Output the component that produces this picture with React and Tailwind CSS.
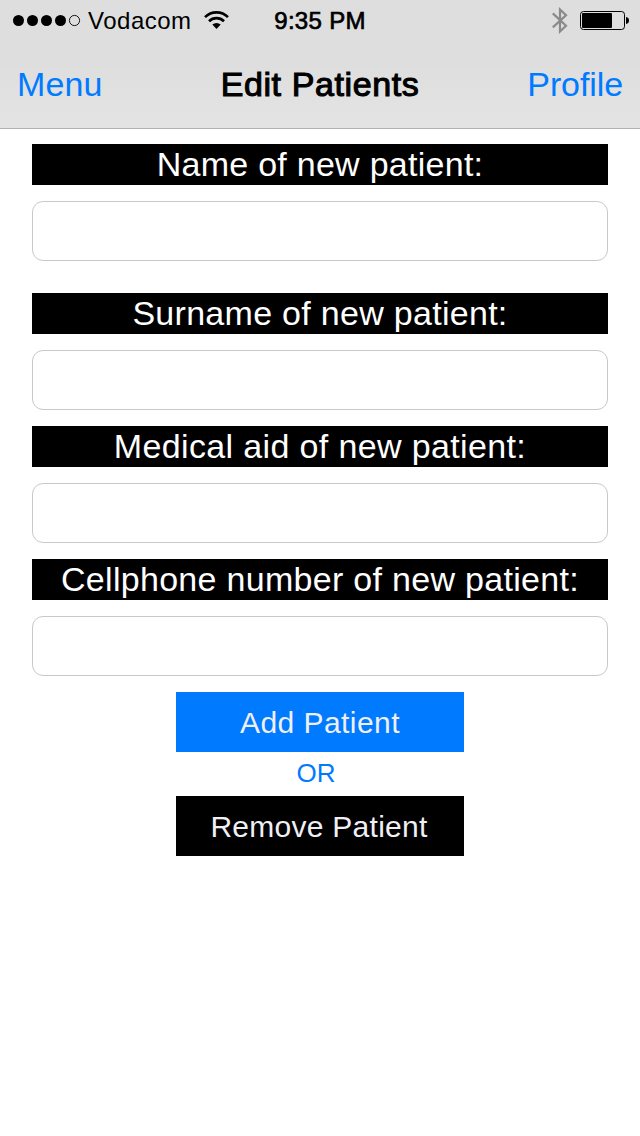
const fields = [
  { label: 'Name of new patient:', gap: 'mb-8', tracking: 'tracking-[0.27px]' },
  { label: 'Surname of new patient:', gap: 'mb-4', tracking: 'tracking-[0.29px]' },
  { label: 'Medical aid of new patient:', gap: 'mb-4', tracking: 'tracking-[0.36px]' },
  { label: 'Cellphone number of new patient:', gap: 'mb-4', tracking: 'tracking-[0.3px]' },
];

function SignalDots() {
  return (
    <svg width="68" height="14" viewBox="0 0 68 14" className="block">
      {[5.5, 19.5, 33.5, 47.5].map((cx) => (
        <circle key={cx} cx={cx} cy="6.5" r="5.5" />
      ))}
      <circle cx="61.5" cy="6.5" r="5.1" fill="none" stroke="#000" strokeWidth="0.9" />
    </svg>
  );
}

function Wifi() {
  return (
    <svg width="25" height="20" viewBox="0 0 25 20" className="block">
      <g fill="none" stroke="#000" strokeWidth="2.6">
        <path d="M1 6.1 A16.3 16.3 0 0 1 24 6.1" />
        <path d="M5 10.2 A10.7 10.7 0 0 1 20 10.2" />
      </g>
      <path d="M8.3 13.6 A6.2 6.2 0 0 1 16.7 13.6 L12.5 18 Z" />
    </svg>
  );
}

function Bluetooth() {
  return (
    <svg width="18" height="28" viewBox="0 0 18 28" className="block">
      <path
        d="M1.8 6.4 L15 18.8 L9 24.5 V2.5 L15 8.2 L1.8 20.4"
        fill="none"
        stroke="#8a8a8a"
        strokeWidth="2.2"
      />
    </svg>
  );
}

function Battery() {
  return (
    <svg width="50" height="20" viewBox="0 0 50 20" className="block">
      <rect x="0.5" y="0.5" width="44" height="18" rx="3" fill="none" stroke="#000" />
      <rect x="2" y="2" width="30" height="15" rx="1" />
      <path d="M46 6 C48 6.3 49 7.5 49 9.5 C49 11.5 48 12.7 46 13 Z" />
    </svg>
  );
}

export default function App() {
  return (
    <div className="flex h-[1136px] w-[640px] flex-col bg-white font-['Liberation_Sans',Arial,sans-serif] text-black">
      <header className="flex h-[129px] flex-col border-b border-[#b2b2b2] bg-linear-to-b from-[#dedede] from-50% to-[#e4e4e4]">
        <div className="grid h-10 grid-cols-[260px_120px_260px] items-center text-[24px] leading-[42px]">
          <div className="flex items-center pl-[13px]">
            <SignalDots />
            <span className="ml-[7px] w-[116px] tracking-[0.5px]">Vodacom</span>
            <Wifi />
          </div>
          <div className="text-center tracking-[0.3px] [-webkit-text-stroke:0.7px_#000]">9:35 PM</div>
          <div className="flex items-center justify-end pr-[10px]">
            <Bluetooth />
            <div className="ml-[11px]">
              <Battery />
            </div>
          </div>
        </div>
        <div className="grid h-[88px] grid-cols-[160px_320px_160px] items-center text-[34px] leading-[88px]">
          <button className="pl-[17px] text-left tracking-[0.1px] text-[#007aff]">Menu</button>
          <h1 className="text-center tracking-[0.6px] [-webkit-text-stroke:1.1px_#000]">Edit Patients</h1>
          <button className="pr-[17px] text-right tracking-[-0.1px] text-[#007aff]">Profile</button>
        </div>
      </header>

      <main className="flex flex-col px-8 pt-[15px]">
        {fields.map((f) => (
          <label key={f.label} className={'flex flex-col gap-4 ' + f.gap}>
            <span className={'h-[41px] bg-black text-center text-[34px] leading-[41px] whitespace-nowrap text-white ' + f.tracking}>
              {f.label}
            </span>
            <input className="h-[60px] rounded-[11px] border border-[#c9c9c9] bg-white px-3 text-[28px] outline-none" />
          </label>
        ))}
        <div className="flex flex-col items-center">
          <button className="h-[60px] w-72 bg-[#007aff] pt-px text-[30px] leading-[60px] tracking-[0.45px] text-[#efeff4]">
            Add Patient
          </button>
          <span className="h-11 pr-2 text-[26px] leading-[42px] text-[#007aff]">OR</span>
          <button className="h-[60px] w-72 bg-black pt-px pr-[2px] text-[30px] leading-[60px] tracking-[0.27px] text-[#efeff4]">
            Remove Patient
          </button>
        </div>
      </main>
    </div>
  );
}
